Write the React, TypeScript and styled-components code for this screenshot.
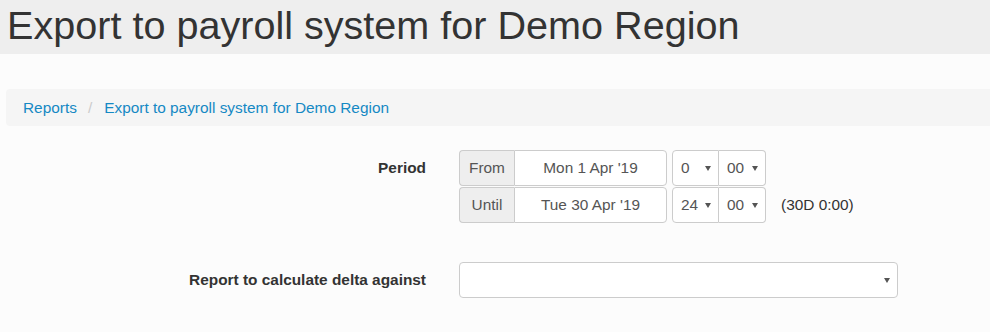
import styled, { createGlobalStyle } from "styled-components";

const GlobalStyle = createGlobalStyle`
  html, body {
    margin: 0;
    padding: 0;
    background: #fcfcfc;
    font-family: "Liberation Sans", Arial, sans-serif;
    font-size: 15.4px;
    color: #333;
  }
`;

const Caret = () => (
  <svg width="6" height="5" viewBox="0 0 6 5">
    <path d="M0 0 L6 0 L3 5 Z" fill="#555" />
  </svg>
);

type SelectProps = { value?: string; width: number; first?: boolean; last?: boolean };

const FakeSelect = ({ value, width, first, last }: SelectProps) => (
  <StSelect $width={width} $first={first} $last={last}>
    <span>{value}</span>
    <Caret />
  </StSelect>
);

const App = () => {
  return (
    <>
      <GlobalStyle />
      <StHeader>
        <StTitle>Export to payroll system for Demo Region</StTitle>
      </StHeader>
      <StBreadcrumb>
        <StCrumb>Reports</StCrumb>
        <StSep>/</StSep>
        <StCrumb>Export to payroll system for Demo Region</StCrumb>
      </StBreadcrumb>
      <StForm>
        <StLabel>Period</StLabel>
        <StPeriodRows>
          <StRangeRow>
            <StInputGroup>
              <StAddon>From</StAddon>
              <StDateInput>Mon 1 Apr '19</StDateInput>
            </StInputGroup>
            <StTimeGroup>
              <FakeSelect value="0" width={47} first />
              <FakeSelect value="00" width={47} last />
            </StTimeGroup>
          </StRangeRow>
          <StRangeRow>
            <StInputGroup>
              <StAddon>Until</StAddon>
              <StDateInput>Tue 30 Apr '19</StDateInput>
            </StInputGroup>
            <StTimeGroup>
              <FakeSelect value="24" width={47} first />
              <FakeSelect value="00" width={47} last />
            </StTimeGroup>
            <StDuration>(30D 0:00)</StDuration>
          </StRangeRow>
        </StPeriodRows>

        <StLabel $spaced>Report to calculate delta against</StLabel>
        <StReportSelect $spaced>
          <span />
          <Caret />
        </StReportSelect>
      </StForm>
    </>
  );
};

export default App;

const StHeader = styled.div`
  height: 54px;
  background: #eeeeee;
  padding-left: 7px;
  box-sizing: border-box;
`;

const StTitle = styled.h1`
  margin: 0;
  font-size: 39.6px;
  font-weight: normal;
  line-height: 50px;
  color: #333;
`;

const StBreadcrumb = styled.div`
  margin: 35px 0 0 6px;
  height: 37px;
  padding: 0 17px;
  display: flex;
  align-items: center;
  gap: 11px;
  background: #f5f5f5;
  border-radius: 4px 0 0 4px;
`;

const StCrumb = styled.span`
  color: #1589c4;
`;

const StSep = styled.span`
  color: #ccc;
  margin-right: 1px;
`;

const StForm = styled.div`
  display: grid;
  grid-template-columns: 426px 1fr;
  column-gap: 33px;
  margin-top: 24px;
`;

const StLabel = styled.div<{ $spaced?: boolean }>`
  text-align: right;
  font-weight: bold;
  line-height: 36px;
  margin-top: ${(p) => (p.$spaced ? "39px" : "0")};
`;

const StPeriodRows = styled.div`
  display: flex;
  flex-direction: column;
  gap: 1px;
`;

const StRangeRow = styled.div`
  display: flex;
  align-items: center;
`;

const StInputGroup = styled.div`
  display: flex;
  height: 36px;
`;

const StAddon = styled.div`
  width: 55px;
  box-sizing: border-box;
  display: flex;
  align-items: center;
  justify-content: center;
  background: #eee;
  border: 1px solid #ccc;
  border-right: none;
  border-radius: 4px 0 0 4px;
  color: #555;
`;

const StDateInput = styled.div`
  width: 153px;
  box-sizing: border-box;
  display: flex;
  align-items: center;
  justify-content: center;
  background: #fff;
  border: 1px solid #ccc;
  border-radius: 0 4px 4px 0;
  color: #555;
`;

const StTimeGroup = styled.div`
  display: flex;
  margin-left: 5px;
`;

const StSelect = styled.div<{ $width: number; $first?: boolean; $last?: boolean }>`
  width: ${(p) => p.$width}px;
  height: 36px;
  box-sizing: border-box;
  display: flex;
  align-items: center;
  justify-content: space-between;
  padding: 0 7px 0 8px;
  background: #fff;
  border: 1px solid #ccc;
  border-left: ${(p) => (p.$first ? "1px solid #ccc" : "none")};
  border-radius: ${(p) =>
    p.$first ? "4px 0 0 4px" : p.$last ? "0 4px 4px 0" : "0"};
  color: #555;
`;

const StDuration = styled.div`
  margin-left: 15px;
  color: #333;
`;

const StReportSelect = styled.div<{ $spaced?: boolean }>`
  width: 439px;
  height: 36px;
  box-sizing: border-box;
  margin-top: ${(p) => (p.$spaced ? "39px" : "0")};
  display: flex;
  align-items: center;
  justify-content: space-between;
  padding: 0 7px 0 12px;
  background: #fff;
  border: 1px solid #ccc;
  border-radius: 4px;
`;
